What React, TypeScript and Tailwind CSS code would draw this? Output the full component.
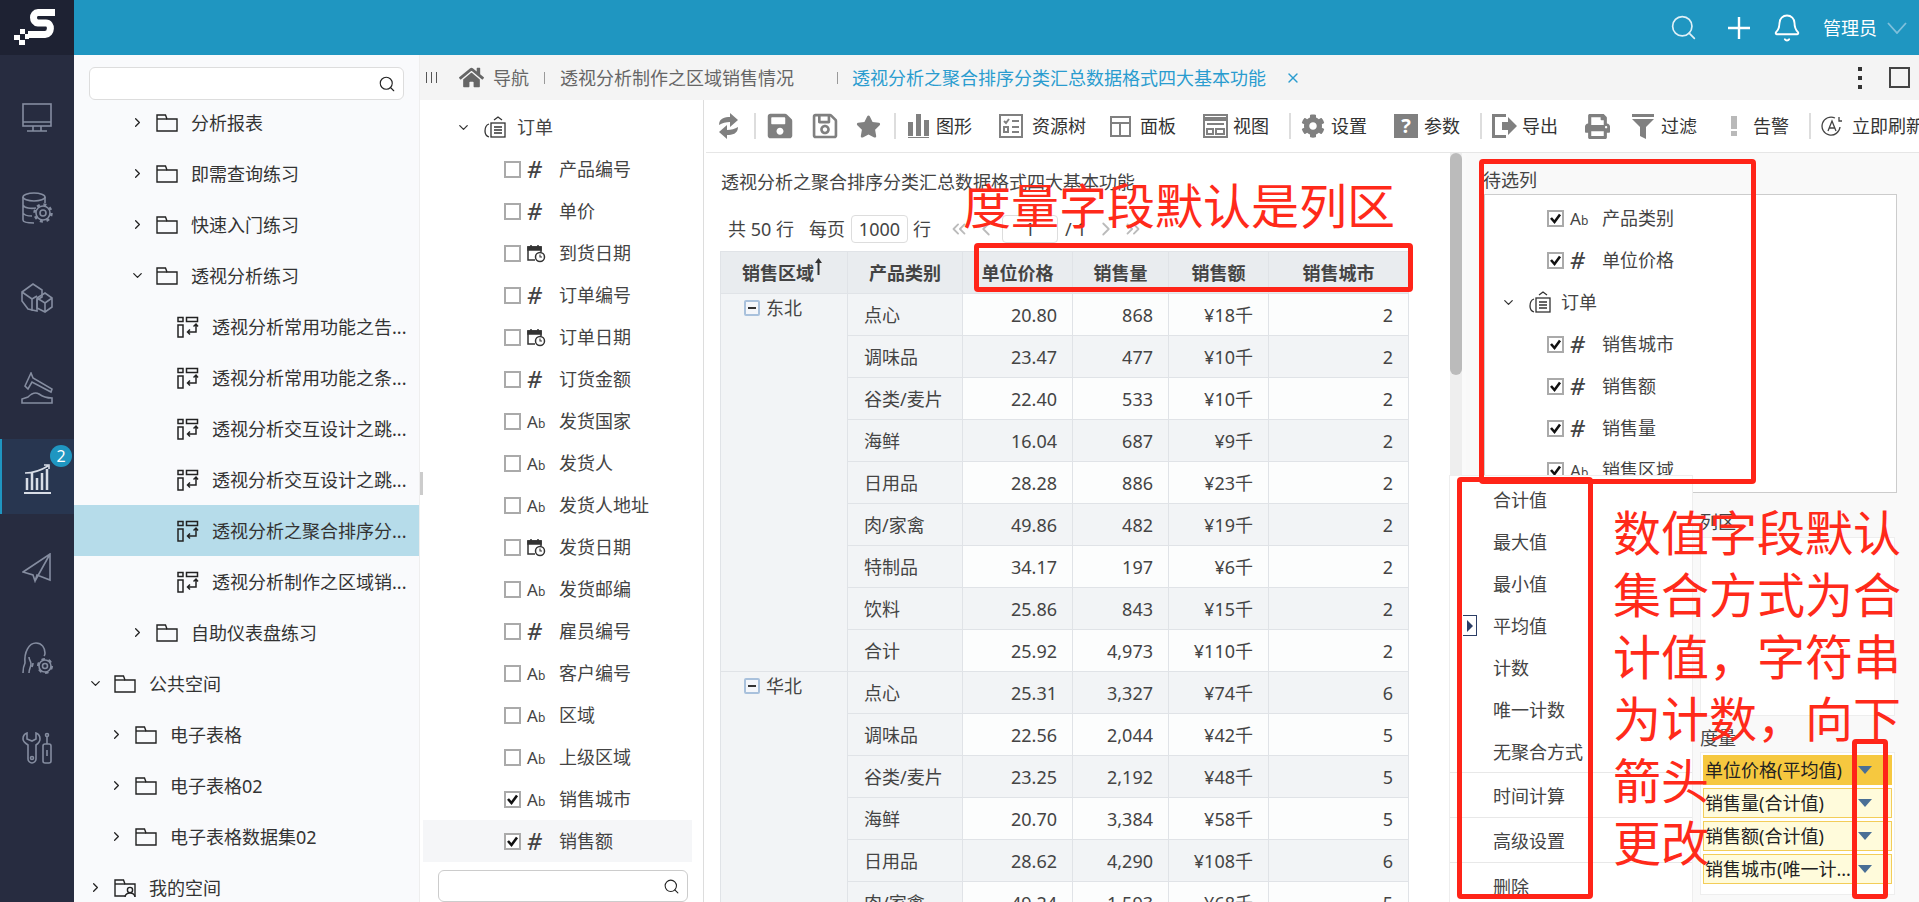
import { ChevronDown, ChevronLeft, ChevronRight, ChevronsLeft, ChevronsRight, Search, Bell, X } from "lucide-react";
import { FaCog, FaHome, FaPrint, FaRegSave, FaSave, FaStar } from "react-icons/fa";
import type { ReactNode } from "react";

const FONT = "[font-family:'Noto_Sans','Noto_Sans_CJK_SC',sans-serif]";

function Folder({ user }: { user?: boolean }) {
  return (
    <svg width="22" height="18" viewBox="0 0 22 18" fill="none" stroke="#222" strokeWidth="1.4" className="shrink-0">
      <path d="M1 1v16h20V5H11L9.5 1z" />
      <path d="M1 5h10" />
      {user && <circle cx="16" cy="11" r="2.6" fill="#f9fafc" />}
      {user && <path d="M11 18c.5-3 2.5-4 5-4s4.500 1 5 4" fill="#f9fafc" />}
    </svg>
  );
}

function ReportIcon() {
  return (
    <svg width="22" height="22" viewBox="0 0 22 22" fill="none" stroke="#222" strokeWidth="1.5" className="shrink-0">
      <rect x="1" y="1.500" width="5" height="4" />
      <rect x="9.500" y="1.500" width="11" height="4" />
      <rect x="1" y="9" width="5" height="12" />
      <path d="M19 9v7h-8M13 13.500 10.500 16l2.500 2.500M16.500 10.500 19 8l2 2.500" />
    </svg>
  );
}

function TableIcon() {
  return (
    <svg width="22" height="22" viewBox="0 0 22 22" fill="none" stroke="#333" strokeWidth="1.3" className="shrink-0">
      <path d="M5 8C2 9 1 12 1 15s1 5 4 6" />
      <rect x="7" y="7" width="14" height="14" />
      <path d="M10 11h8M10 14h8M10 17h8M10 4l4-3 4 3" />
    </svg>
  );
}

function DateIcon() {
  return (
    <svg width="19" height="19" viewBox="0 0 19 19" fill="none" stroke="#333" strokeWidth="1.5">
      <path d="M8 16H1V3h13v5" />
      <path d="M1 3h13v3H1z" fill="#333" />
      <path d="M4 1v3M11 1v3" />
      <circle cx="13" cy="13" r="4.500" fill="#fff" />
      <path d="M13 10.500V13h2" strokeWidth="1.1" />
    </svg>
  );
}

function FieldKind({ kind }: { kind: string }) {
  if (kind === "num") return <span className="text-[23px] leading-none font-medium text-[#444] italic">#</span>;
  if (kind === "date") return <DateIcon />;
  return (
    <span className="leading-none text-[#444]">
      <span className="text-[17px]">A</span>
      <span className="text-[12px]">b</span>
    </span>
  );
}

function Field({ label, kind, checked, selected }: { label: string; kind: string; checked?: boolean; selected?: boolean }) {
  return (
    <div className={selected ? "flex h-[42px] w-[269px] items-center ml-[3px] pl-[81px] bg-[#f5f6f8]" : "flex h-[42px] items-center pl-[84px]"}>
      <span className="flex h-[17px] w-[17px] shrink-0 items-center justify-center border-2 border-[#aaa] bg-white">
        {checked && (
          <svg width="13" height="13" viewBox="0 0 13 13" fill="none" stroke="#111" strokeWidth="2.6">
            <path d="M2 6l3.500 4L11 2.500" />
          </svg>
        )}
      </span>
      <span className="ml-[6px] flex w-[26px] shrink-0 items-center">
        <FieldKind kind={kind} />
      </span>
      <span className="ml-[6px] text-[#444]">{label}</span>
    </div>
  );
}

function TreeRow({ label, pad, open, children }: { label: string; pad: string; open?: boolean; children: ReactNode }) {
  return (
    <div className={`flex h-[51px] items-center ${pad}`}>
      <span className="flex w-[18px] justify-center">
        {open ? <ChevronDown size={15} strokeWidth={2} className="text-[#222]" /> : <ChevronRight size={15} strokeWidth={2} className="text-[#222]" />}
      </span>
      <span className="ml-[10px]">{children}</span>
      <span className="ml-[13px] text-[#333]">{label}</span>
    </div>
  );
}

function ReportRow({ label, active }: { label: string; active?: boolean }) {
  return (
    <div className={active ? "flex h-[51px] items-center pl-[103px] bg-[#b6dcea]" : "flex h-[51px] items-center pl-[103px]"}>
      <ReportIcon />
      <span className="ml-[13px] whitespace-nowrap text-[#333]">{label}</span>
    </div>
  );
}

const stroke = { fill: "none", stroke: "#858da0", strokeWidth: 1.6 };

function RailIcon({ name }: { name: string }) {
  if (name === "monitor")
    return (
      <svg width="32" height="30" viewBox="0 0 32 30" {...stroke}>
        <rect x="2" y="1" width="28" height="22" />
        <path d="M2 19h28M12 23v5M20 23v5M6 28h20" />
      </svg>
    );
  if (name === "db")
    return (
      <svg width="32" height="32" viewBox="0 0 32 32" {...stroke}>
        <ellipse cx="13" cy="5" rx="11" ry="4" />
        <path d="M2 5v23c0 2 5 3 11 3M24 5v6M2 13c1 3 8 4 13 3M2 21c1 2 5 3 9 3" />
        <circle cx="22" cy="21" r="3" />
        <circle cx="22" cy="21" r="7" />
        <circle cx="22" cy="21" r="8.500" strokeDasharray="3 3.700" strokeWidth="2.500" />
      </svg>
    );
  if (name === "cube")
    return (
      <svg width="32" height="30" viewBox="0 0 32 30" {...stroke}>
        <path d="M1 9 12 1l9 6v7l-5 3v11L7 26 1 18zM1 9l10 7 5-3M11 16v12" />
        <path d="M16 15l8-5 7 5v9l-7 5-8-4zM16 15l8 5 7-5M24 20v9" />
      </svg>
    );
  if (name === "hammer")
    return (
      <svg width="32" height="32" viewBox="0 0 32 32" {...stroke}>
        <path d="M10 1 4 14l3 3 4-7 19 10 1-3L12 6z" />
        <path d="M1 31h30v-5c-6 0-9-1-13-4-5-3-9 1-11 3l-6 2z" />
      </svg>
    );
  if (name === "chart")
    return (
      <svg width="30" height="30" viewBox="0 0 30 30" fill="none" stroke="#d8dde6" strokeWidth="1.6">
        <path d="M1 29h27" strokeWidth="2" />
        <path d="M4 26V14M9 26V9M14 26V14M19 26V9M24 26V5" strokeWidth="2.500" />
        <path d="M2 9C10 9 17 7 25 2M21 1h5v4" />
      </svg>
    );
  if (name === "plane")
    return (
      <svg width="30" height="30" viewBox="0 0 30 30" {...stroke}>
        <path d="M1 19 28 1v26l-13-5-2 6-2-6zM28 1 13 28" />
      </svg>
    );
  if (name === "head")
    return (
      <svg width="32" height="32" viewBox="0 0 32 32" {...stroke}>
        <path d="M2 31c0-5 1-8 2-10C3 10 8 1 15 1c6 0 9 5 9 10 0 1 0 2-1 3M8 31c0-4 2-6 2-9 0-3-2-4-2-7M11 25c1-2 1-2 1-4" />
        <circle cx="24" cy="24" r="2.500" />
        <circle cx="24" cy="24" r="6" />
        <circle cx="24" cy="24" r="7" strokeDasharray="3.500 3.800" strokeWidth="2" />
      </svg>
    );
  return (
    <svg width="30" height="32" viewBox="0 0 30 32" {...stroke}>
      <path d="M5 1C2 2 1 5 1 7s2 4 5 6v14c0 2 2 4 4 4s4-2 4-4V13c3-2 4-4 4-6s-1-5-4-6v6l-4 2-5-2z" />
      <circle cx="10" cy="26" r="1.500" />
      <rect x="21" y="12" width="8" height="19" rx="2" />
      <path d="M25 12V4M25 18v6" />
      <circle cx="25" cy="3" r="1.500" />
    </svg>
  );
}

function RailItem({ name, active }: { name: string; active?: boolean }) {
  return (
    <div className={active ? "relative flex h-[75px] items-center justify-center border-l-2 border-[#1f96c1] bg-[#283650] pt-[4px]" : "flex h-[75px] items-center justify-center pt-[3px]"}>
      <RailIcon name={name} />
      {active && (
        <span className="absolute left-[48px] top-[6px] flex h-[22px] w-[22px] items-center justify-center rounded-full bg-[#1f96c1] text-[16px] text-white">2</span>
      )}
    </div>
  );
}

function Tool({ w, gap, icon, label }: { w: string; gap?: string; icon: ReactNode; label?: string }) {
  return (
    <div className={`flex shrink-0 items-center ${w}`}>
      {icon}
      {label && <span className={`whitespace-nowrap text-[#333] ${gap ?? "ml-[7px]"}`}>{label}</span>}
    </div>
  );
}

function ToolSep({ w }: { w: string }) {
  return (
    <div className={`flex shrink-0 ${w}`}>
      <span className="h-[26px] w-[1.500px] bg-[#ddd]" />
    </div>
  );
}

const g = { fill: "#808080" };
const gs = { fill: "none", stroke: "#808080", strokeWidth: 2 };

type Row = [string, string, string, string, string];

const north: Row[] = [
  ["点心", "20.80", "868", "¥18千", "2"],
  ["调味品", "23.47", "477", "¥10千", "2"],
  ["谷类/麦片", "22.40", "533", "¥10千", "2"],
  ["海鲜", "16.04", "687", "¥9千", "2"],
  ["日用品", "28.28", "886", "¥23千", "2"],
  ["肉/家禽", "49.86", "482", "¥19千", "2"],
  ["特制品", "34.17", "197", "¥6千", "2"],
  ["饮料", "25.86", "843", "¥15千", "2"],
  ["合计", "25.92", "4,973", "¥110千", "2"],
];

const china: Row[] = [
  ["点心", "25.31", "3,327", "¥74千", "6"],
  ["调味品", "22.56", "2,044", "¥42千", "5"],
  ["谷类/麦片", "23.25", "2,192", "¥48千", "5"],
  ["海鲜", "20.70", "3,384", "¥58千", "5"],
  ["日用品", "28.62", "4,290", "¥108千", "6"],
  ["肉/家禽", "49.24", "1,593", "¥68千", "5"],
];

function RegionCell({ name, span }: { name: string; span: number }) {
  return (
    <td rowSpan={span} className="border border-[#e0e3e7] bg-[#f2f4f6] p-0 align-top">
      <div className="flex items-center pl-[23px] pt-[1px] text-[#444]">
        <span className="flex h-[16px] w-[16px] items-center justify-center rounded-[2px] border-2 border-[#a9c1dc] bg-[#f4f6fa]">
          <span className="h-[2px] w-[8px] bg-[#333]" />
        </span>
        <span className="ml-[6px]">{name}</span>
      </div>
    </td>
  );
}

function DataRow({ row, odd, region }: { row: Row; odd: boolean; region?: ReactNode }) {
  const cell = odd ? "border border-[#e0e3e7] bg-[#f2f4f6] p-0 pr-[15px] text-right" : "border border-[#e0e3e7] bg-[#fcfdfd] p-0 pr-[15px] text-right";
  return (
    <tr className="h-[42px] text-[#444]">
      {region}
      <td className="border border-[#e0e3e7] bg-[#f2f4f6] p-0 pl-[16px]">{row[0]}</td>
      <td className={cell}>{row[1]}</td>
      <td className={cell}>{row[2]}</td>
      <td className={cell}>{row[3]}</td>
      <td className={cell}>{row[4]}</td>
    </tr>
  );
}

function MeasureItem({ label, active }: { label: string; active?: boolean }) {
  return (
    <div className={active ? "flex h-[30px] items-center justify-between bg-[#f6c83f] pl-[2px] pr-[20px] text-[#222]" : "flex h-[30px] items-center justify-between border border-[#f3cd58] bg-[#fffbdb] pl-[1px] pr-[19px] text-[#222]"}>
      <span className="whitespace-nowrap">{label}</span>
      <span className="h-0 w-0 border-x-[7px] border-t-[8px] border-x-transparent border-t-[#4a6f95]" />
    </div>
  );
}

function MenuItem({ label, cls }: { label: string; cls: string }) {
  return <div className={`flex items-center pl-[43px] text-[#444] ${cls}`}>{label}</div>;
}

export default function App() {
  return (
    <div className={`relative flex h-[902px] w-[1919px] overflow-hidden bg-white text-[18px] leading-[26px] ${FONT}`}>
      {/* left rail */}
      <aside className="flex w-[74px] shrink-0 flex-col bg-[#272c40]">
        <div className="flex h-[55px] items-center justify-center bg-[#1e2233]">
          <svg width="50" height="42" viewBox="0 0 50 42" fill="none">
            <path d="M43 5.500H26c-6 0-6 10 0 10.500h8c6 0 6 11-1 11.500H16" stroke="#fff" strokeWidth="7" />
            <path d="M8 22h5v5H8zM2 28h6v5H2zM13 27h4v5h-4zM7 33h6v5H7z" fill="#fff" />
          </svg>
        </div>
        <div className="flex flex-col gap-[15px] pt-[24px]">
          <RailItem name="monitor" />
          <RailItem name="db" />
          <RailItem name="cube" />
          <RailItem name="hammer" />
          <RailItem name="chart" active />
          <RailItem name="plane" />
          <RailItem name="head" />
          <RailItem name="tools" />
        </div>
      </aside>

      <div className="flex min-w-0 flex-1 flex-col">
        {/* top bar */}
        <header className="flex h-[55px] shrink-0 items-center justify-end bg-[#1f96c1] pr-[12px] text-white">
          <Search size={29} strokeWidth={1.4} className="text-[#dff0f7]" />
          <svg width="22" height="22" viewBox="0 0 22 22" stroke="#fff" strokeWidth="2.400" className="ml-[30px]">
            <path d="M11 0v22M0 11h22" />
          </svg>
          <Bell size={30} strokeWidth={1.5} className="ml-[22px]" />
          <span className="ml-[21px]">管理员</span>
          <svg width="20" height="12" viewBox="0 0 20 12" fill="none" stroke="#7fc0dc" strokeWidth="1.800" className="ml-[10px]">
            <path d="M1 1l9 10 9-10" />
          </svg>
        </header>

        <div className="flex min-h-0 flex-1">
          {/* resource tree */}
          <nav className="relative w-[346px] shrink-0 border-r border-[#eee] bg-[#f9fafc]">
            <div className="mx-[15px] mb-[-3px] mt-[12px] flex h-[33px] w-[315px] items-center justify-end rounded-[6px] border border-[#ddd] bg-white pr-[7px]">
              <Search size={18} strokeWidth={1.5} className="text-[#222]" />
            </div>
            <TreeRow label="分析报表" pad="pl-[54px]"><Folder /></TreeRow>
            <TreeRow label="即需查询练习" pad="pl-[54px]"><Folder /></TreeRow>
            <TreeRow label="快速入门练习" pad="pl-[54px]"><Folder /></TreeRow>
            <TreeRow label="透视分析练习" pad="pl-[54px]" open><Folder /></TreeRow>
            <ReportRow label="透视分析常用功能之告..." />
            <ReportRow label="透视分析常用功能之条..." />
            <ReportRow label="透视分析交互设计之跳..." />
            <ReportRow label="透视分析交互设计之跳..." />
            <ReportRow label="透视分析之聚合排序分..." active />
            <ReportRow label="透视分析制作之区域销..." />
            <TreeRow label="自助仪表盘练习" pad="pl-[54px]"><Folder /></TreeRow>
            <TreeRow label="公共空间" pad="pl-[12px]" open><Folder /></TreeRow>
            <TreeRow label="电子表格" pad="pl-[33px]"><Folder /></TreeRow>
            <TreeRow label="电子表格02" pad="pl-[33px]"><Folder /></TreeRow>
            <TreeRow label="电子表格数据集02" pad="pl-[33px]"><Folder /></TreeRow>
            <TreeRow label="我的空间" pad="pl-[12px]"><Folder user /></TreeRow>
            <span className="absolute -right-[4px] top-[417px] h-[23px] w-[3px] bg-[#ccc]" />
          </nav>

          <div className="flex min-w-0 flex-1 flex-col">
            {/* tabs */}
            <div className="flex h-[45px] shrink-0 items-center bg-[#f4f4f4] pl-[6px] text-[#666]">
              <span className="flex h-[11px] w-[11px] justify-between border-x border-[#555]">
                <span className="ml-[4px] h-full w-[1px] bg-[#555]" />
              </span>
              <FaHome size={25} className="ml-[22px] text-[#666]" />
              <span className="ml-[9px]">导航</span>
              <span className="ml-[15px] h-[12px] w-[1px] bg-[#999]" />
              <span className="ml-[15px]">透视分析制作之区域销售情况</span>
              <span className="ml-[43px] h-[12px] w-[1px] bg-[#999]" />
              <span className="ml-[14px] text-[#2a9ccf]">透视分析之聚合排序分类汇总数据格式四大基本功能</span>
              <X size={16} strokeWidth={2} className="ml-[19px] text-[#2a9ccf]" />
              <span className="ml-auto flex h-[22px] w-[4px] flex-col justify-between">
                <span className="h-[4px] w-[4px] bg-[#333]" />
                <span className="h-[4px] w-[4px] bg-[#333]" />
                <span className="h-[4px] w-[4px] bg-[#333]" />
              </span>
              <span className="ml-[27px] mr-[9px] h-[21px] w-[21px] border-2 border-[#444]" />
            </div>

            <div className="flex min-h-0 flex-1">
              {/* fields */}
              <section className="w-[284px] shrink-0 border-r border-[#ddd] pt-[6px]">
                <div className="flex h-[42px] items-center pl-[36px] text-[#444]">
                  <ChevronDown size={15} strokeWidth={2} className="text-[#333]" />
                  <span className="ml-[13px]"><TableIcon /></span>
                  <span className="ml-[11px]">订单</span>
                </div>
                <Field label="产品编号" kind="num" />
                <Field label="单价" kind="num" />
                <Field label="到货日期" kind="date" />
                <Field label="订单编号" kind="num" />
                <Field label="订单日期" kind="date" />
                <Field label="订货金额" kind="num" />
                <Field label="发货国家" kind="text" />
                <Field label="发货人" kind="text" />
                <Field label="发货人地址" kind="text" />
                <Field label="发货日期" kind="date" />
                <Field label="发货邮编" kind="text" />
                <Field label="雇员编号" kind="num" />
                <Field label="客户编号" kind="text" />
                <Field label="区域" kind="text" />
                <Field label="上级区域" kind="text" />
                <Field label="销售城市" kind="text" checked />
                <Field label="销售额" kind="num" checked selected />
                <div className="ml-[18px] mt-[8px] flex h-[32px] w-[250px] items-center justify-end rounded-[6px] border border-[#ccc] pr-[7px]">
                  <Search size={17} strokeWidth={1.5} className="text-[#222]" />
                </div>
              </section>

              <div className="flex min-w-0 flex-1 flex-col">
                {/* toolbar */}
                <div className="ml-[2px] flex h-[53px] shrink-0 items-center overflow-hidden border-b border-[#e6e6e6] pl-[12px]">
                  <Tool w="w-[36px]" icon={
                    <svg width="21" height="26" viewBox="0 0 21 26" {...g}>
                      <path d="M1 12C1 5 7 4 12 4V0l8 7-8 7V9C8 9 4 10 1 12zM20 14c0 7-6 8-11 8v4l-8-7 8-7v5c4 0 8-1 11-3z" />
                    </svg>
                  } />
                  <ToolSep w="w-[12px]" />
                  <Tool w="w-[45px]" icon={<FaSave size={28} className="text-[#808080]" />} />
                  <Tool w="w-[45px]" icon={<FaRegSave size={28} className="text-[#808080]" />} />
                  <Tool w="w-[38px]" icon={<FaStar size={25} className="text-[#808080]" />} />
                  <ToolSep w="w-[14px]" />
                  <Tool w="w-[91px]" label="图形" icon={
                    <svg width="21" height="24" viewBox="0 0 21 24" {...g}>
                      <path d="M0 8h5v14H0zM8 0h5v22H8zM16 6h5v16h-5zM0 23h21v1H0z" />
                    </svg>
                  } />
                  <Tool w="w-[111px]" gap="ml-[9px]" label="资源树" icon={
                    <svg width="24" height="24" viewBox="0 0 24 24" {...gs}>
                      <rect x="1" y="1" width="22" height="22" />
                      <path d="M5 7l2 2 3-4M13 7h7M5 13h4v5H5zM13 13h7M13 18h7" />
                    </svg>
                  } />
                  <Tool w="w-[93px]" gap="ml-[9px]" label="面板" icon={
                    <svg width="21" height="21" viewBox="0 0 21 21" {...gs}>
                      <rect x="1" y="1" width="19" height="19" />
                      <path d="M1 7h19M10 7v13" />
                    </svg>
                  } />
                  <Tool w="w-[86px]" gap="ml-[5px]" label="视图" icon={
                    <svg width="25" height="24" viewBox="0 0 25 24" {...gs}>
                      <rect x="1" y="1" width="23" height="22" />
                      <path d="M1 5h23" strokeWidth="4" />
                      <path d="M4 10h17M4 15h6v5H4zM13 15h8v5h-8z" />
                    </svg>
                  } />
                  <ToolSep w="w-[12px]" />
                  <Tool w="w-[93px]" gap="ml-[6px]" label="设置" icon={<FaCog size={24} className="text-[#808080]" />} />
                  <Tool w="w-[86px]" gap="ml-[6px]" label="参数" icon={
                    <span className="flex h-[24px] w-[24px] items-center justify-center bg-[#808080] text-[20px] font-bold text-white">?</span>
                  } />
                  <ToolSep w="w-[12px]" />
                  <Tool w="w-[93px]" gap="ml-[5px]" label="导出" icon={
                    <svg width="25" height="24" viewBox="0 0 25 24" {...g}>
                      <path d="M0 0h14v3H3v18h11v3H0zM10 8h6V3l9 9-9 9v-5h-6z" />
                    </svg>
                  } />
                  <Tool w="w-[47px]" icon={<FaPrint size={25} className="text-[#808080]" />} />
                  <Tool w="w-[98px]" label="过滤" icon={
                    <svg width="22" height="25" viewBox="0 0 22 25" {...g}>
                      <path d="M0 0h22v3H0zM0 5h22l-8 8v12l-6-3v-9z" />
                    </svg>
                  } />
                  <Tool w="w-[79px]" gap="ml-[15px]" label="告警" icon={
                    <svg width="8" height="20" viewBox="0 0 8 20" fill="#b9b9b9">
                      <path d="M1 0h6v13H1zM1 15h6v5H1z" />
                    </svg>
                  } />
                  <ToolSep w="w-[12px]" />
                  <Tool w="w-[110px]" gap="ml-[9px]" label="立即刷新" icon={
                    <svg width="22" height="22" viewBox="0 0 22 22" fill="none" stroke="#444" strokeWidth="1.3">
                      <path d="M19 12A9 9 0 1 1 14 3" />
                      <path d="M18 2v4h3" />
                      <path d="M7 16l4-10 4 10M8.500 13h5" />
                    </svg>
                  } />
                </div>

                <div className="flex min-h-0 flex-1">
                  {/* report */}
                  <main className="w-[746px] shrink-0 overflow-hidden pl-[17px] pt-[16px] text-[#444]">
                    <div>透视分析之聚合排序分类汇总数据格式四大基本功能</div>
                    <div className="mt-[20px] flex h-[28px] items-center">
                      <span className="ml-[7px]">共 50 行</span>
                      <span className="ml-[15px]">每页</span>
                      <span className="ml-[6px] flex h-[28px] w-[57px] items-center justify-center rounded-[4px] border border-[#ddd]">1000</span>
                      <span className="ml-[5px]">行</span>
                      <ChevronsLeft size={22} className="ml-[17px] text-[#bbb]" />
                      <ChevronLeft size={22} className="ml-[5px] text-[#bbb]" />
                      <span className="ml-[5px] flex h-[28px] w-[56px] items-center justify-center rounded-[4px] border border-[#ddd]">1</span>
                      <span className="ml-[7px]">/ 1</span>
                      <ChevronRight size={22} className="ml-[8px] text-[#bbb]" />
                      <ChevronsRight size={22} className="ml-[5px] text-[#bbb]" />
                    </div>
                    <table className="mt-[8px] -ml-[1px] w-[688px] table-fixed border-collapse">
                      <colgroup>
                        <col className="w-[127px]" />
                        <col className="w-[115px]" />
                        <col className="w-[110px]" />
                        <col className="w-[96px]" />
                        <col className="w-[100px]" />
                        <col className="w-[140px]" />
                      </colgroup>
                      <thead>
                        <tr className="h-[42px] bg-[#e9ecef] font-bold text-[#444]">
                          <th className="border border-[#e0e3e7] p-0 font-bold">
                            <span className="flex items-start justify-center pr-[4px]">
                              销售区域
                              <svg width="7" height="17" viewBox="0 0 7 17" fill="#333" className="ml-[1px] mt-[-2px]">
                                <path d="M3.500 0 7 5H4.500v12h-2V5H0z" />
                              </svg>
                            </span>
                          </th>
                          <th className="border border-[#e0e3e7] p-0 font-bold">产品类别</th>
                          <th className="border border-[#e0e3e7] p-0 font-bold">单位价格</th>
                          <th className="border border-[#e0e3e7] p-0 font-bold">销售量</th>
                          <th className="border border-[#e0e3e7] p-0 font-bold">销售额</th>
                          <th className="border border-[#e0e3e7] p-0 font-bold">销售城市</th>
                        </tr>
                      </thead>
                      <tbody>
                        {north.map((r, i) => (
                          <DataRow key={i} row={r} odd={i % 2 === 1} region={i === 0 ? <RegionCell name="东北" span={9} /> : undefined} />
                        ))}
                        {china.map((r, i) => (
                          <DataRow key={i} row={r} odd={i % 2 === 0} region={i === 0 ? <RegionCell name="华北" span={6} /> : undefined} />
                        ))}
                      </tbody>
                    </table>
                  </main>

                  {/* scrollbar */}
                  <div className="w-[12px] shrink-0 bg-[#eee]">
                    <div className="h-[222px] rounded-[6px] bg-[#bbb]" />
                  </div>
                  <div className="w-[4px] shrink-0 bg-[#fafafa]" />

                  {/* bindings */}
                  <section className="relative min-w-0 flex-1 bg-[#f9f9f9] text-[#444]">
                    <div className="ml-[17px] mt-[14px]">待选列</div>
                    <div className="ml-[18px] mt-[1px] h-[299px] w-[413px] overflow-hidden border border-[#ccc] bg-white pt-[2px]">
                      <div className="-ml-[22px]">
                        <Field label="产品类别" kind="text" checked />
                        <Field label="单位价格" kind="num" checked />
                      </div>
                      <div className="flex h-[42px] items-center pl-[16px]">
                        <ChevronDown size={15} strokeWidth={2} className="text-[#333]" />
                        <span className="ml-[13px]"><TableIcon /></span>
                        <span className="ml-[10px]">订单</span>
                      </div>
                      <div className="-ml-[22px]">
                        <Field label="销售城市" kind="num" checked />
                        <Field label="销售额" kind="num" checked />
                        <Field label="销售量" kind="num" checked />
                        <Field label="销售区域" kind="text" checked />
                      </div>
                    </div>

                    <div className="ml-[234px] mt-[16px]">列区</div>
                    <div className="ml-[234px] mt-[2px] h-[179px] w-[195px] border border-[#eee] bg-white" />
                    <div className="ml-[234px] mt-[9px]">度量</div>
                    <div className="ml-[234px] mt-[1px] flex h-[143px] w-[195px] flex-col gap-[3px] border border-[#eee] bg-white px-[2px] pt-[2px]">
                      <MeasureItem label="单位价格(平均值)" active />
                      <MeasureItem label="销售量(合计值)" />
                      <MeasureItem label="销售额(合计值)" />
                      <MeasureItem label="销售城市(唯一计..." />
                    </div>

                    {/* aggregation menu */}
                    <div className="absolute -left-[17px] top-[322px] h-[440px] w-[244px] border border-[#eee] bg-white pt-[3px]">
                      <MenuItem label="合计值" cls="h-[42px]" />
                      <MenuItem label="最大值" cls="h-[42px]" />
                      <MenuItem label="最小值" cls="h-[42px]" />
                      <div className="relative">
                        <span className="absolute left-[13px] top-[10px] flex h-[21px] w-[14px] items-center justify-center border border-l-0 border-[#2c3e66]">
                          <span className="h-0 w-0 border-y-[6px] border-l-[6px] border-y-transparent border-l-[#2c3e66]" />
                        </span>
                        <MenuItem label="平均值" cls="h-[42px]" />
                      </div>
                      <MenuItem label="计数" cls="h-[42px]" />
                      <MenuItem label="唯一计数" cls="h-[42px]" />
                      <MenuItem label="无聚合方式" cls="h-[42px] border-b border-[#e8e8e8]" />
                      <MenuItem label="时间计算" cls="h-[45px] pt-[2px] border-b border-[#e8e8e8]" />
                      <MenuItem label="高级设置" cls="h-[45px] pt-[2px] border-b border-[#e8e8e8]" />
                      <MenuItem label="删除" cls="h-[45px] pt-[2px]" />
                    </div>
                  </section>
                </div>
              </div>
            </div>
          </div>
        </div>
      </div>

      {/* red annotations drawn over the screenshot */}
      <div className="absolute left-[974px] top-[243px] h-[49px] w-[439px] rounded-[4px] border-[5px] border-[#ff2418]" />
      <div className="absolute left-[1479px] top-[159px] h-[325px] w-[277px] rounded-[4px] border-[5px] border-[#ff2418]" />
      <div className="absolute left-[1457px] top-[477px] h-[422px] w-[136px] rounded-[4px] border-[5px] border-[#ff2418]" />
      <div className="absolute left-[1852px] top-[739px] h-[160px] w-[36px] rounded-[4px] border-[5px] border-[#ff2418]" />
      <div className="absolute left-[963px] top-[175px] whitespace-nowrap text-[48px] leading-[62px] text-[#ff2a1a]">度量字段默认是列区</div>
      <div className="absolute left-[1613px] top-[502px] w-[290px] text-[48px] leading-[62px] text-[#ff2a1a]">
        <div>数值字段默认</div>
        <div>集合方式为合</div>
        <div>计值，字符串</div>
        <div>为计数，向下</div>
        <div>箭头</div>
        <div>更改</div>
      </div>
    </div>
  );
}
